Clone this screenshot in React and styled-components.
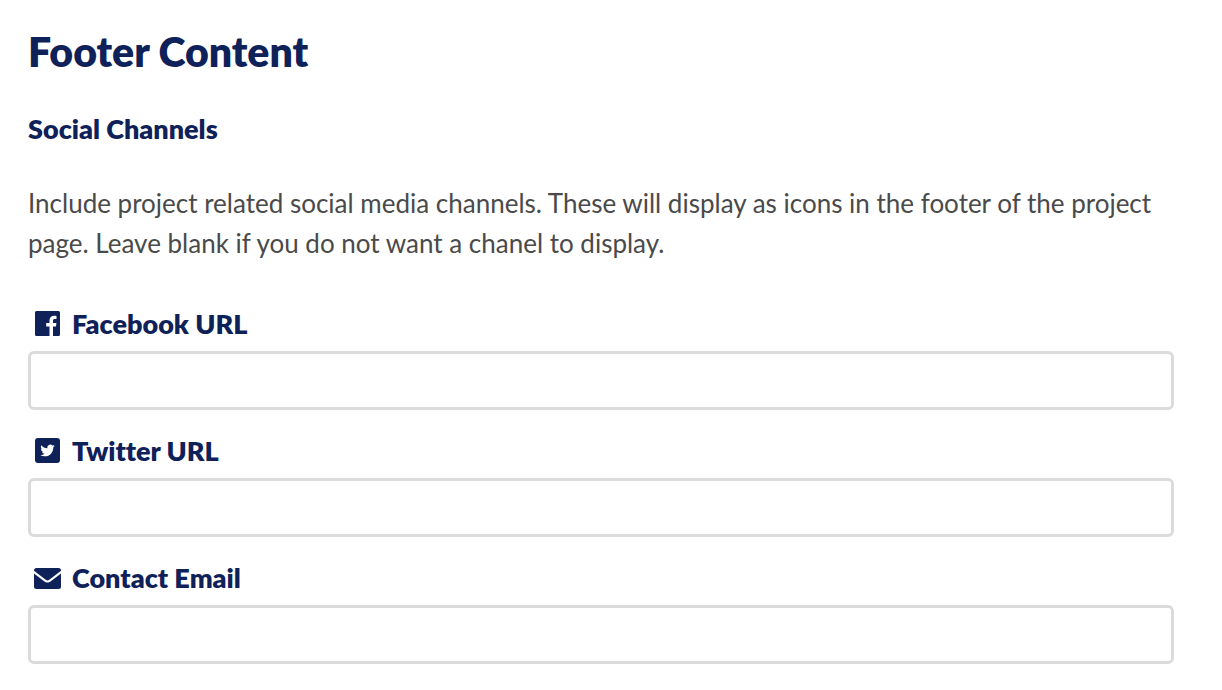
import React from 'react'
import styled, { createGlobalStyle } from 'styled-components'

const GlobalStyle = createGlobalStyle`
  *,
  *::before,
  *::after {
    box-sizing: border-box;
  }

  body {
    margin: 0;
    background: #fff;
    color: #4a4a4a;
    font-family: Lato, sans-serif;
    font-size: 26px;
    line-height: 40px;
    font-variant-ligatures: none;
    -webkit-font-smoothing: antialiased;
  }
`

const Section = styled.section`
  padding: 27px 48px 26px 28px;
`

const Title = styled.h1`
  margin: 0 0 32px;
  color: #0f2159;
  font-size: 41px;
  font-weight: 800;
  line-height: 50px;
`

const Subtitle = styled.h2`
  margin: 0 0 34px;
  color: #0f2159;
  font-size: 27px;
  font-weight: 800;
  line-height: 40px;
`

const Description = styled.p`
  margin: 0 0 41px;
`

const Form = styled.form`
  display: grid;
  gap: 21px;
`

const Label = styled.label`
  display: flex;
  align-items: center;
  gap: 11px;
  height: 40px;
  margin-bottom: 7px;
  padding-left: 6px;
  color: #0f2159;
  font-size: 27px;
  font-weight: 800;

  svg {
    display: block;
    width: 27px;
    height: 27px;
    margin-bottom: 2px;
  }
`

const Input = styled.input`
  display: block;
  width: 100%;
  height: 59px;
  padding: 0 16px;
  border: 3px solid #dbdbdb;
  border-radius: 6px;
  background: #fff;
  color: #4a4a4a;
  font: inherit;
`

const FacebookIcon = () => (
  <svg viewBox='0 -1 27 27' fill='currentColor' aria-hidden='true'>
    <path d='M2.500 0h22a1.500 1.500 0 0 1 1.500 1.500v22a1.500 1.500 0 0 1-1.500 1.500H19v-9.600h3l.4-3.400H19V9.700c0-1.200.5-1.800 1.800-1.800h1.700V4.900c-.5-.1-1.400-.2-2.400-.2-2.800 0-4.600 1.600-4.600 4.700V12h-3.300v3.400h3.300V25H2.500A1.500 1.500 0 0 1 1 23.500v-22A1.500 1.500 0 0 1 2.500 0z' />
  </svg>
)

const TwitterIcon = () => (
  <svg viewBox='0 -1 27 27' fill='currentColor' aria-hidden='true'>
    <rect x='1' width='25' height='25' rx='3' />
    <path
      fill='#fff'
      transform='translate(6.300 5.300) scale(.6)'
      d='M23.953 4.57a10 10 0 01-2.825.775 4.958 4.958 0 002.163-2.723c-.951.555-2.005.959-3.127 1.184a4.92 4.92 0 00-8.384 4.482C7.69 8.095 4.067 6.13 1.64 3.162a4.822 4.822 0 00-.666 2.475c0 1.71.87 3.213 2.188 4.096a4.904 4.904 0 01-2.228-.616v.06a4.923 4.923 0 003.946 4.827 4.996 4.996 0 01-2.212.085 4.936 4.936 0 004.604 3.417 9.867 9.867 0 01-6.102 2.105c-.39 0-.779-.023-1.17-.067a13.995 13.995 0 007.557 2.209c9.053 0 13.998-7.496 13.998-13.985 0-.21 0-.42-.015-.63A9.935 9.935 0 0024 4.59z'
    />
  </svg>
)

const EnvelopeIcon = () => (
  <svg viewBox='0 -1 27 27' fill='currentColor' aria-hidden='true'>
    <path d='M2.500 3h22A2.500 2.500 0 0 1 27 5.500v.3l-10.700 8.300c-1.100.9-1.800 1.300-2.800 1.300s-1.700-.4-2.800-1.300L0 5.800v-.3A2.500 2.500 0 0 1 2.500 3zM0 8.500l9.200 7.100c1.700 1.400 2.800 2 4.300 2s2.600-.6 4.300-2L27 8.500v13a2.500 2.500 0 0 1-2.500 2.500h-22A2.500 2.500 0 0 1 0 21.500z' />
  </svg>
)

const fields = [
  { id: 'facebook', label: 'Facebook URL', type: 'url', Icon: FacebookIcon },
  { id: 'twitter', label: 'Twitter URL', type: 'url', Icon: TwitterIcon },
  { id: 'email', label: 'Contact Email', type: 'email', Icon: EnvelopeIcon }
]

const Field = ({ id, label, type, Icon }) => (
  <div>
    <Label htmlFor={id}>
      <Icon />
      {label}
    </Label>
    <Input id={id} name={id} type={type} />
  </div>
)

const App = () => (
  <>
    <GlobalStyle />
    <Section>
      <Title>Footer Content</Title>
      <Subtitle>Social Channels</Subtitle>
      <Description>
        Include project related social media channels. These will display as icons in the footer of the project page. Leave blank if you do not want a chanel to display.
      </Description>
      <Form>
        {fields.map(field => <Field key={field.id} {...field} />)}
      </Form>
    </Section>
  </>
)

export default App
